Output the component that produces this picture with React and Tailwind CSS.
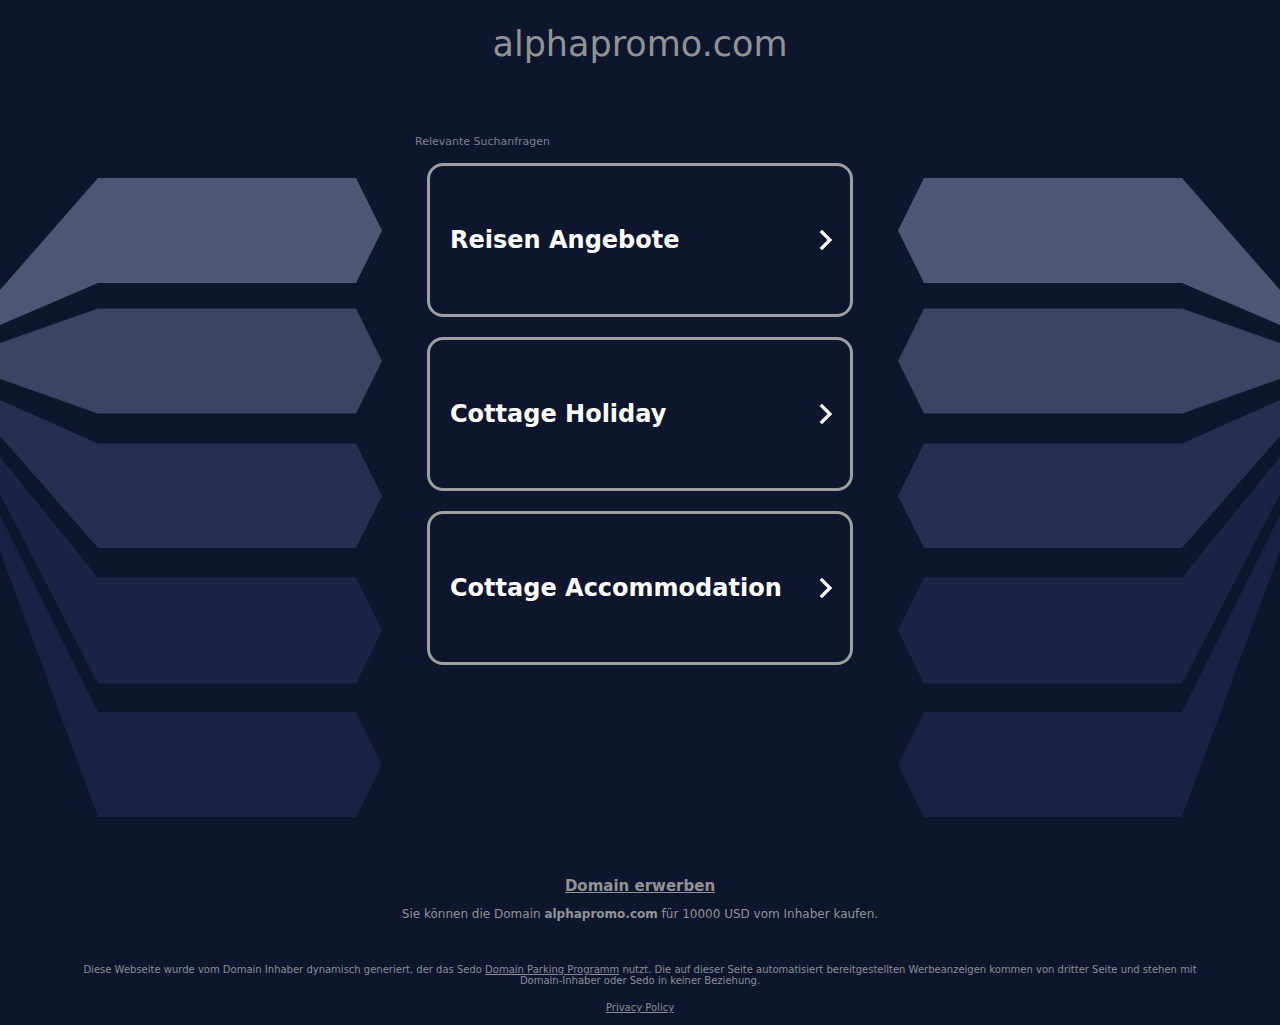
const searches = ["Reisen Angebote", "Cottage Holiday", "Cottage Accommodation"];

const arrows = [
  { fill: "#4d5775", points: "0,112 98,0 356,0 382,52.5 356,105 98,105 0,147" },
  { fill: "#3a4463", points: "0,165 98,130.5 356,130.5 382,183 356,235.5 98,235.5 0,201" },
  { fill: "#252f4f", points: "0,222 98,265.5 356,265.5 382,318 356,370 98,370 0,258" },
  { fill: "#1a2444", points: "0,279 98,399.5 356,399.5 382,452.5 356,505.5 98,505.5 0,316" },
  { fill: "#182242", points: "0,337 98,534 356,534 382,586.5 356,639 98,639 0,373" },
];

function Arrows({ className = "" }) {
  return (
    <svg
      viewBox="0 0 382 639"
      aria-hidden="true"
      className={`hidden lg:block w-[382px] shrink-0 mt-[59px] ${className}`}
    >
      {arrows.map((arrow) => (
        <polygon key={arrow.fill} fill={arrow.fill} points={arrow.points} />
      ))}
    </svg>
  );
}

function SearchLink({ label }) {
  return (
    <a
      href="#"
      className="flex items-center justify-between min-h-[154px] pl-5 pr-3 rounded-2xl border-3 border-[#9d9fa1] text-2xl font-bold text-white"
    >
      <span>{label}</span>
      <svg
        viewBox="0 0 24 24"
        className="size-6 shrink-0"
        fill="currentColor"
        stroke="currentColor"
        strokeWidth="0.5"
        aria-hidden="true"
      >
        <path d="M5.88 4.12L13.76 12l-7.88 7.88L8 22l10-10L8 2z" />
      </svg>
    </a>
  );
}

export default function App() {
  return (
    <div className="min-h-screen bg-[#0e162e] text-[#919395] font-['DejaVu_Sans',sans-serif]">
      <header className="pt-6 pb-[54px] text-center">
        <h1 className="text-[35px] leading-[41px]">alphapromo.com</h1>
      </header>

      <main className="flex justify-center lg:justify-between items-start">
        <Arrows />

        <section className="w-full max-w-[450px] pt-4">
          <h2 className="text-[11px] leading-[14px] text-[#7d828e]">Relevante Suchanfragen</h2>
          <div className="flex flex-col gap-5 px-3 pt-[14px]">
            {searches.map((label) => (
              <SearchLink key={label} label={label} />
            ))}
          </div>
        </section>

        <Arrows className="-scale-x-100" />
      </main>

      {/* Buy this domain */}
      <section className="flex flex-col items-center gap-3 pt-[60px] px-5 text-center">
        <a href="#" className="text-[15px] leading-[18px] font-bold underline">
          Domain erwerben
        </a>
        <p className="text-xs leading-[14px]">
          Sie können die Domain <strong>alphapromo.com</strong> für 10000 USD vom Inhaber kaufen.
        </p>
      </section>

      <footer className="pt-[43px] pb-3 px-20 text-center text-[10px] leading-[11px] text-[#8b8f97]">
        <p>
          Diese Webseite wurde vom Domain Inhaber dynamisch generiert, der das Sedo{" "}
          <a href="#" className="underline">Domain Parking Programm</a> nutzt. Die auf dieser Seite
          automatisiert bereitgestellten Werbeanzeigen kommen von dritter Seite und stehen mit
          Domain-Inhaber oder Sedo in keiner Beziehung.
        </p>
        <p className="mt-4">
          <a href="#" className="underline">Privacy Policy</a>
        </p>
      </footer>
    </div>
  );
}
